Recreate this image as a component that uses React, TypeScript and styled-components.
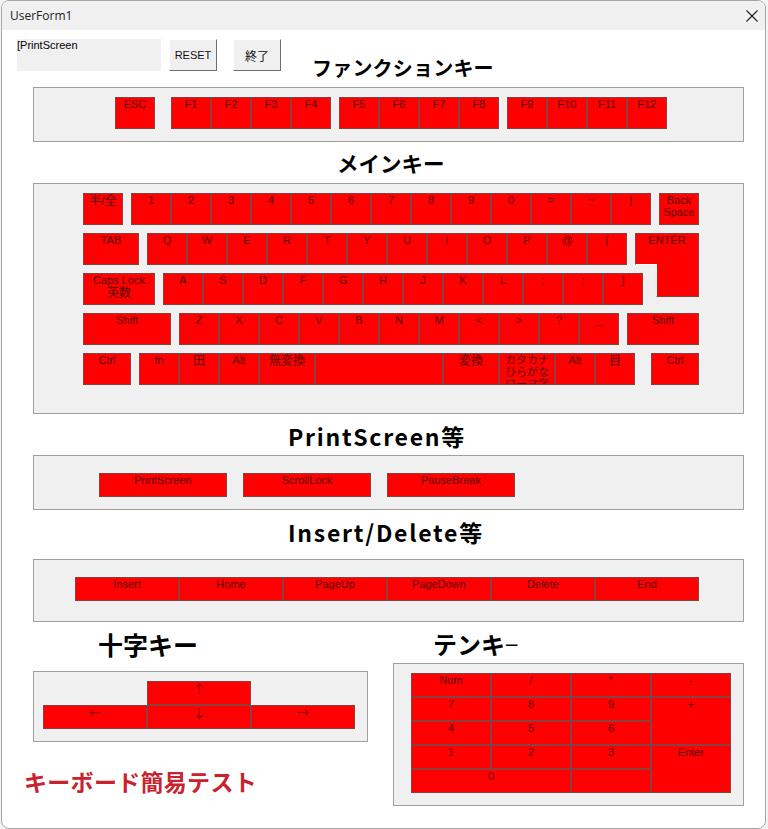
import React from 'react';
import styled, { createGlobalStyle } from 'styled-components';

const GlobalStyle = createGlobalStyle`
  html, body {
    margin: 0;
    background: #f4f4f4;
  }
  body {
    font-family: "Liberation Sans", "Noto Sans CJK JP", sans-serif;
  }
`;

const Window = styled.div`
  box-sizing: border-box;
  width: 765px;
  height: 829px;
  margin-left: 1px;
  border: 1px solid #a6a6a6;
  border-radius: 8px;
  background: #fff;
  overflow: hidden;
`;

const TitleBar = styled.div`
  height: 29px;
  padding: 0 7px 0 8px;
  display: flex;
  align-items: center;
  justify-content: space-between;
  background: #f0f0f0;
  font-family: "Open Sans", sans-serif;
  font-size: 12px;
  color: #222;
`;

const Body = styled.div`
  padding: 9px 0 0 31px;
`;

const TopRow = styled.div`
  display: flex;
  align-items: flex-start;
  height: 48px;
  margin-left: -16px;
`;

const ReadOut = styled.div`
  box-sizing: border-box;
  width: 144px;
  height: 32px;
  background: #f0f0f0;
  font-size: 11px;
  line-height: 13px;
`;

const FormButton = styled.button<{ $gap: number; $size: number }>`
  box-sizing: border-box;
  width: 48px;
  height: 32px;
  margin-left: ${(p) => p.$gap}px;
  padding: 0;
  border: 1px solid;
  border-color: #fff #6e6e6e #6e6e6e #fff;
  background: #f0f0f0;
  font-family: inherit;
  font-size: ${(p) => p.$size}px;
  color: #111;
`;

const Heading = styled.div<{ $left: number; $h: number; $size: number; $top?: number; $spacing?: number }>`
  box-sizing: border-box;
  height: ${(p) => p.$h}px;
  padding-top: ${(p) => p.$top ?? 0}px;
  margin-left: ${(p) => p.$left}px;
  font-family: "Noto Sans CJK JP", sans-serif;
  font-weight: 700;
  font-size: ${(p) => p.$size}px;
  line-height: 28px;
  letter-spacing: ${(p) => p.$spacing ?? 0}px;
  color: #000;
  white-space: nowrap;
`;

const ThinDash = styled.span`
  font-weight: 400;
`;

const Panel = styled.div<{ $w?: number; $h: number; $pl: number; $pt: number }>`
  box-sizing: border-box;
  width: ${(p) => p.$w ?? 711}px;
  height: ${(p) => p.$h}px;
  padding: ${(p) => p.$pt}px 0 0 ${(p) => p.$pl}px;
  border: 1px solid #a0a0a0;
  background: #f0f0f0;
`;

const Row = styled.div<{ $gap?: number }>`
  display: flex;
  gap: ${(p) => p.$gap ?? 0}px;
`;

const KeyRows = styled.div`
  display: flex;
  flex-direction: column;
  gap: 8px;
`;

const Key = styled.div<{ $w?: number; $h?: number; $col?: number; $row?: number; $start?: number }>`
  box-sizing: border-box;
  flex: none;
  width: ${(p) => (p.$w ? `${p.$w}px` : 'auto')};
  height: ${(p) => (p.$h ? `${p.$h}px` : 'auto')};
  ${(p) => p.$col && `grid-column: ${p.$start ? `${p.$start} / ` : ''}span ${p.$col};`}
  ${(p) => p.$row && `grid-row: span ${p.$row};`}
  border: 1px solid #8c3f3f;
  background: #ff0000;
  font-size: 11px;
  line-height: 12px;
  color: #5c0000;
  text-align: center;
  white-space: pre-line;
  overflow: hidden;
`;

const JpLabel = styled.span`
  display: inline-block;
  font-size: 12px;
  line-height: 15px;
`;

const ArrowKey = styled(Key)`
  font-family: "Noto Sans CJK JP", sans-serif;
  font-size: 12px;
  line-height: 14px;
  color: #6a0000;
`;

const EnterKey = styled(Key)`
  position: relative;
  overflow: visible;
  border-bottom-color: #fff;

  &::after {
    content: '';
    position: absolute;
    top: 30px;
    right: -1px;
    box-sizing: border-box;
    width: 43px;
    height: 33px;
    background: #ff0000;
    border: 1px solid #8c3f3f;
    border-top: 0;
    border-left-color: #fff;
  }
`;

const LastKey = styled(Key)`
  margin-left: 8px;
`;

const BottomGrid = styled.div`
  display: grid;
  grid-template-columns: 335px 351px;
  column-gap: 25px;
`;

const ArrowPad = styled.div`
  display: grid;
  grid-template-columns: repeat(3, 104px);
  grid-auto-rows: 24px;
`;

const NumPad = styled.div`
  display: grid;
  grid-template-columns: repeat(4, 80px);
  grid-auto-rows: 24px;
`;

const Caption = styled.div`
  margin: 24px 0 0 -9px;
  font-family: "Noto Sans CJK JP", sans-serif;
  font-weight: 700;
  font-size: 23px;
  line-height: 30px;
  letter-spacing: 0.3px;
  color: #c9222f;
  white-space: nowrap;
`;

type KeyDef = [React.ReactNode, number];

const fnGroups = [
  ['F1', 'F2', 'F3', 'F4'],
  ['F5', 'F6', 'F7', 'F8'],
  ['F9', 'F10', 'F11', 'F12'],
];

const keyGroup = (labels: string[]) => (
  <Row>
    {labels.map((l, i) => (
      <Key key={i} $w={40} $h={32}>{l}</Key>
    ))}
  </Row>
);

const bottomRow: KeyDef[] = [
  ['fn', 40],
  [<JpLabel>田</JpLabel>, 40],
  ['Alt', 40],
  [<JpLabel>無変換</JpLabel>, 56],
  ['', 128],
  [<JpLabel>変換</JpLabel>, 56],
  ['カタカナ\nひらがな\nローマ字', 56],
  ['Alt', 40],
  [<JpLabel>目</JpLabel>, 40],
];

const numKeys: { label: string; col?: number; row?: number }[] = [
  { label: 'Num' }, { label: '/' }, { label: '*' }, { label: '-' },
  { label: '7' }, { label: '8' }, { label: '9' }, { label: '+', row: 2 },
  { label: '4' }, { label: '5' }, { label: '6' },
  { label: '1' }, { label: '2' }, { label: '3' }, { label: 'Enter', row: 2 },
  { label: '0', col: 2 }, { label: '' },
];

const App = () => {
  return (
    <>
      <GlobalStyle />
      <Window>
        <TitleBar>
          <span>UserForm1</span>
          <svg width="12" height="12" viewBox="0 0 12 12" stroke="#222" strokeWidth="1.1" fill="none">
            <path d="M0.5 0.5 L11.5 11.5 M11.5 0.5 L0.5 11.5" />
          </svg>
        </TitleBar>
        <Body>
          <TopRow>
            <ReadOut>[PrintScreen</ReadOut>
            <FormButton $gap={8} $size={11}>RESET</FormButton>
            <FormButton $gap={16} $size={12}>終了</FormButton>
            <Heading $left={31} $h={48} $size={20} $top={15} $spacing={0.2}>ファンクションキー</Heading>
          </TopRow>

          <Panel $h={55} $pl={81} $pt={9}>
            <Row $gap={16}>
              <Key $w={40} $h={32}>ESC</Key>
              <Row $gap={8}>
                {fnGroups.map((g, i) => (
                  <React.Fragment key={i}>{keyGroup(g)}</React.Fragment>
                ))}
              </Row>
            </Row>
          </Panel>

          <Heading $left={304} $h={41} $size={21.5} $top={7}>メインキー</Heading>
          <Panel $h={231} $pl={49} $pt={9}>
            <KeyRows>
              <Row $gap={8}>
                <Key $w={40} $h={32}><JpLabel>半/全</JpLabel></Key>
                {keyGroup(['1', '2', '3', '4', '5', '6', '7', '8', '9', '0', '=', '~', '|'])}
                <Key $w={40} $h={32}>{'Back\nSpace'}</Key>
              </Row>
              <Row $gap={8}>
                <Key $w={56} $h={32}>TAB</Key>
                {keyGroup(['Q', 'W', 'E', 'R', 'T', 'Y', 'U', 'I', 'O', 'P', '@', '['])}
                <EnterKey $w={64} $h={32}>ENTER</EnterKey>
              </Row>
              <Row $gap={8}>
                <Key $w={72} $h={32}>Caps Lock{'\n'}<JpLabel>英数</JpLabel></Key>
                {keyGroup(['A', 'S', 'D', 'F', 'G', 'H', 'J', 'K', 'L', ';', ':', ']'])}
              </Row>
              <Row $gap={8}>
                <Key $w={88} $h={32}>Shift</Key>
                {keyGroup(['Z', 'X', 'C', 'V', 'B', 'N', 'M', '<', '>', '?', '_'])}
                <Key $w={72} $h={32}>Shift</Key>
              </Row>
              <Row $gap={8}>
                <Key $w={48} $h={32}>Ctrl</Key>
                <Row>
                  {bottomRow.map(([label, w], i) => (
                    <Key key={i} $w={w} $h={32}>{label}</Key>
                  ))}
                </Row>
                <LastKey $w={48} $h={32}>Ctrl</LastKey>
              </Row>
            </KeyRows>
          </Panel>

          <Heading $left={255} $h={41} $size={23} $top={8} $spacing={1.7}>PrintScreen等</Heading>
          <Panel $h={55} $pl={65} $pt={17}>
            <Row $gap={16}>
              <Key $w={128} $h={24}>PrintScreen</Key>
              <Key $w={128} $h={24}>ScrollLock</Key>
              <Key $w={128} $h={24}>PauseBreak</Key>
            </Row>
          </Panel>

          <Heading $left={255} $h={49} $size={23} $top={8} $spacing={1.75}>Insert/Delete等</Heading>
          <Panel $h={63} $pl={41} $pt={17}>
            <Row>
              {['Insert', 'Home', 'PageUp', 'PageDown', 'Delete', 'End'].map((l) => (
                <Key key={l} $w={104} $h={24}>{l}</Key>
              ))}
            </Row>
          </Panel>

          <BottomGrid>
            <div>
              <Heading $left={65} $h={49} $size={25} $top={8}>十字キー</Heading>
              <Panel $w={335} $h={71} $pl={9} $pt={9}>
                <ArrowPad>
                  <ArrowKey $col={1} $start={2}>↑</ArrowKey>
                  <ArrowKey $col={1} $start={1}>←</ArrowKey>
                  <ArrowKey>↓</ArrowKey>
                  <ArrowKey>→</ArrowKey>
                </ArrowPad>
              </Panel>
              <Caption>キーボード簡易テスト</Caption>
            </div>
            <div>
              <Heading $left={40} $h={41} $size={24} $top={8}>テンキ<ThinDash>−</ThinDash></Heading>
              <Panel $w={351} $h={143} $pl={17} $pt={9}>
                <NumPad>
                  {numKeys.map((k, i) => (
                    <Key key={i} $col={k.col} $row={k.row}>{k.label}</Key>
                  ))}
                </NumPad>
              </Panel>
            </div>
          </BottomGrid>
        </Body>
      </Window>
    </>
  );
};

export default App;
